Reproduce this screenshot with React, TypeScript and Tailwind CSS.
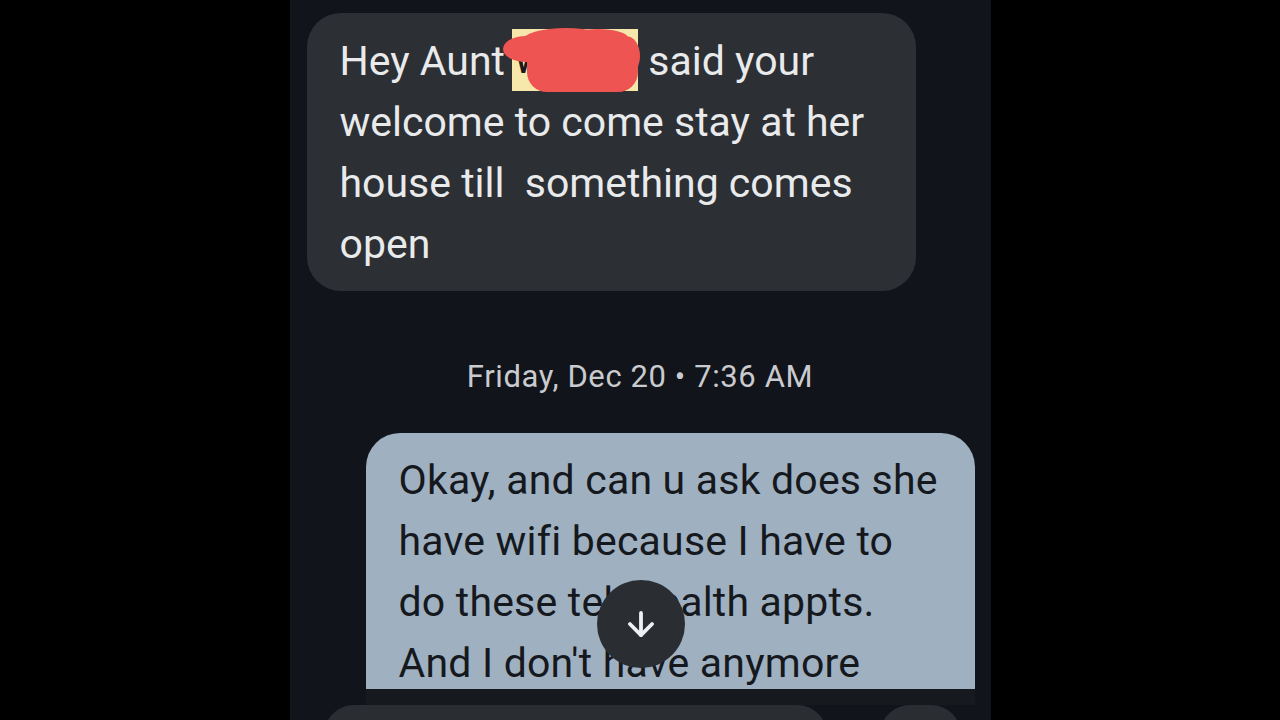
import { ArrowDown } from 'lucide-react';

export default function App() {
  return (
    <div className="w-full h-[720px] bg-black flex justify-center overflow-hidden font-['Roboto',sans-serif]">
      <div className="w-[701px] h-full bg-[#11141a] relative flex flex-col overflow-hidden">

        {/* Incoming message */}
        <div className="pl-[17px] pt-[13px]">
          <div className="w-[609px] rounded-[34px] bg-[#2c2f33] pl-[33px] pr-4 pt-[18px] pb-[16px] text-[41px] leading-[61px] text-[#e9eaec] whitespace-nowrap">
            Hey Aunt{' '}
            <span className="relative inline-block w-[126px] h-[62px] align-top bg-[#f6e8ab] text-[#1a1a1a] -mt-[2px] -ml-[3px]">
              <span className="pl-[1px]">W</span>
              <svg className="absolute -left-[10px] -top-[3px]" width="140" height="68" viewBox="0 0 140 68">
                <g fill="#ee5452">
                  <ellipse cx="64" cy="15" rx="44" ry="13" />
                  <ellipse cx="24" cy="23" rx="23" ry="13" />
                  <rect x="25" y="12" width="111" height="54" rx="20" />
                  <ellipse cx="124" cy="30" rx="14" ry="20" />
                  <ellipse cx="96" cy="12" rx="30" ry="9" />
                </g>
              </svg>
            </span>{' '}
            said your<br />
            welcome to come stay at her<br />
            house till&nbsp; something comes<br />
            open
          </div>
        </div>

        {/* Timestamp */}
        <div className="mt-[68px] text-center text-[31px] leading-[36px] text-[#c9cbce] tracking-[0.6px]">
          Friday, Dec 20 • 7:36 AM
        </div>

        {/* Outgoing message, cut off by composer */}
        <div className="mt-[38px] self-end mr-[16px] w-[609px] h-[256px] shrink-0 rounded-t-[34px] overflow-hidden bg-[#9fb0c1] pl-[33px] pr-2 pt-[17px] text-[41px] leading-[61px] text-[#15181c] whitespace-nowrap tracking-[0.2px]">
          Okay, and can u ask does she<br />
          have wifi because I have to<br />
          do these telehealth appts.<br />
          And I don't have anymore
        </div>
        <div className="self-end mr-[16px] w-[609px] h-[16px] shrink-0 bg-[#161a1f]"></div>

        {/* Composer */}
        <div className="flex items-start shrink-0">
          <div className="ml-[34px] w-[503px] h-[60px] rounded-t-[30px] bg-[#2a2d32]"></div>
          <div className="ml-[53px] w-[81px] h-[60px] rounded-full bg-[#2a2d32]"></div>
        </div>

        {/* Scroll to bottom */}
        <div className="absolute left-[307px] top-[580px] w-[88px] h-[88px] rounded-full bg-[#2a2e33] flex items-center justify-center">
          <ArrowDown className="w-[38px] h-[38px] text-[#eef0f2]" strokeWidth={2.4} />
        </div>
      </div>
    </div>
  );
}
